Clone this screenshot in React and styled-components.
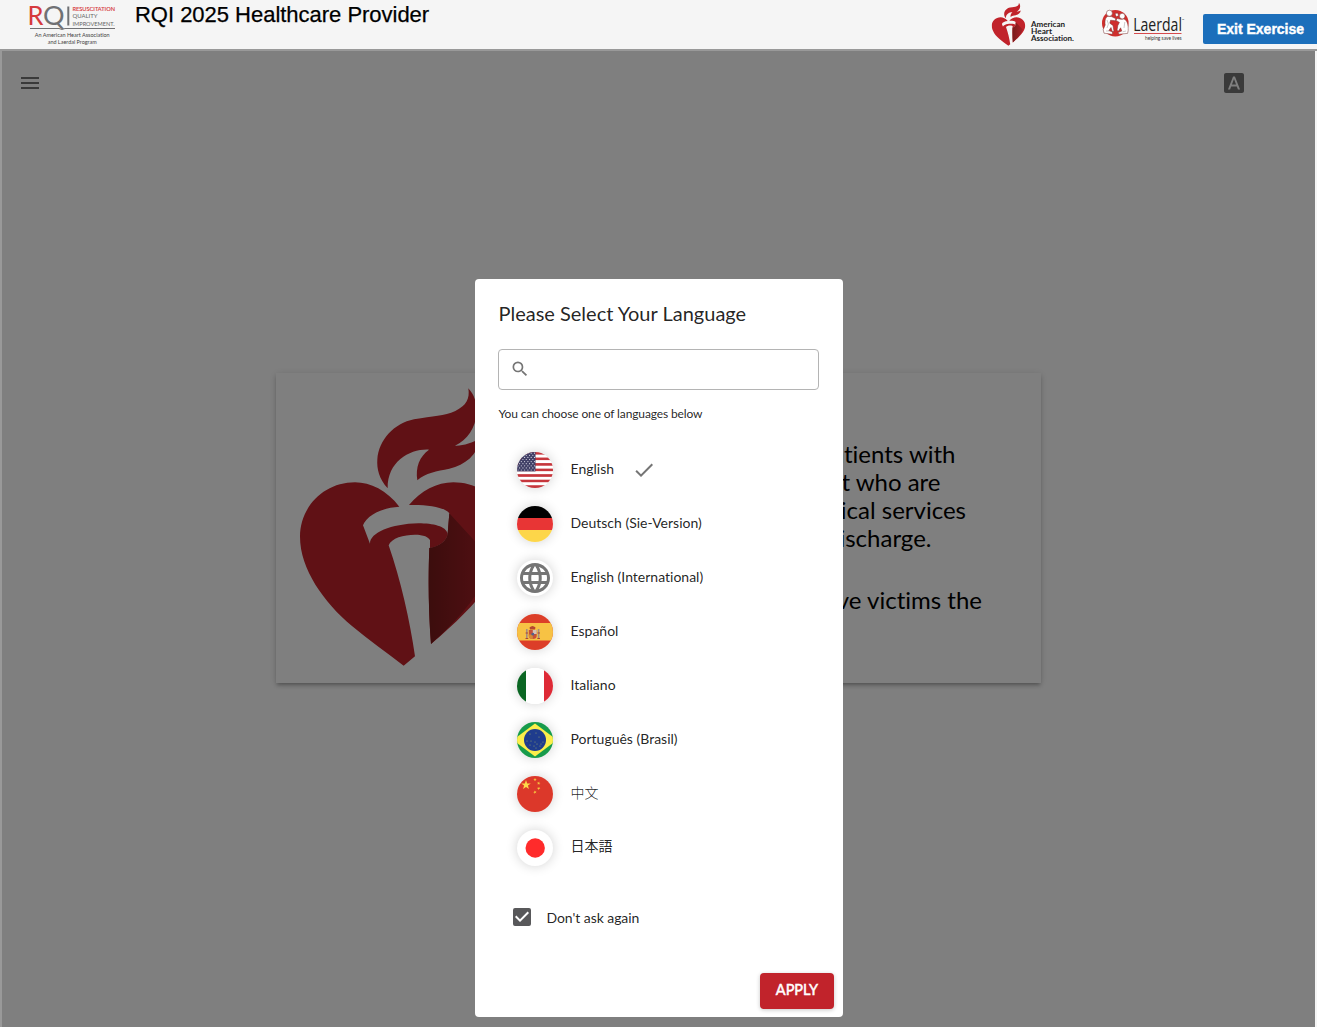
import React from "react";
import styled, { createGlobalStyle } from "styled-components";
import { MdMenu, MdFontDownload, MdSearch, MdCheck, MdLanguage, MdCheckBox } from "react-icons/md";

const GlobalStyle = createGlobalStyle`
  * { box-sizing: border-box; }
  body {
    margin: 0;
    background: #f5f5f5;
    overflow: hidden;
    font-family: Lato, sans-serif;
    font-variant-ligatures: none;
  }
`;

const Page = styled.div`
  display: flex;
  flex-direction: column;
  height: 100vh;
`;

const Header = styled.header`
  display: flex;
  align-items: flex-start;
  height: 49px;
  flex: none;
  background: #f5f5f5;
  padding-left: 28px;
`;

const HeaderTitle = styled.h1`
  margin: 2px 0 0 19px;
  flex: 1;
  font: 400 22px/26px "Liberation Sans", Arial, sans-serif;
  letter-spacing: -0.02px;
  color: #000;
  -webkit-text-stroke: 0.25px #000;
`;

const Logo = styled.svg`
  display: block;
  flex: none;
  overflow: visible;
  margin-right: ${(p) => p.$gap || 0}px;
`;

const ExitButton = styled.button`
  width: 114px;
  height: 30px;
  margin-top: 14px;
  padding: 0 0 0 1px;
  border: 0;
  border-radius: 2px 0 0 2px;
  background: #1c6fbb;
  color: #fff;
  font: 700 14px/30px "Liberation Sans", Arial, sans-serif;
  -webkit-text-stroke: 0.4px #fff;
`;

const Stage = styled.main`
  flex: 1;
  min-height: 0;
  display: grid;
  grid-template: minmax(0, 1fr) / minmax(0, 1fr);
  margin-right: 2px;
  border-left: 2px solid #999;
  background: #fff;
  > * { grid-area: 1 / 1; }
`;

const Scene = styled.section`
  display: flex;
  flex-direction: column;
  align-items: center;
`;

const Toolbar = styled.nav`
  align-self: stretch;
  display: flex;
  justify-content: space-between;
  padding: 20px 69px 0 16px;
  height: 322px;
  color: #757575;
`;

const Card = styled.article`
  display: flex;
  width: 765px;
  height: 310px;
  background: #fff;
  box-shadow: 0 3px 3px -2px rgba(0, 0, 0, 0.2), 0 3px 4px 0 rgba(0, 0, 0, 0.14), 0 1px 8px 0 rgba(0, 0, 0, 0.12);
`;

const CardCopy = styled.div`
  flex: 1;
  display: flex;
  flex-direction: column;
  align-items: flex-end;
  padding-top: 67px;
`;

const CopyLine = styled.span`
  font-size: 24px;
  line-height: 28px;
  white-space: nowrap;
  color: #000;
  margin-right: ${(p) => p.$inset}px;
  margin-top: ${(p) => p.$space || 0}px;
`;

const Backdrop = styled.div`
  z-index: 1;
  display: flex;
  justify-content: center;
  align-items: flex-end;
  padding: 0 0 10px 1px;
  background: rgba(0, 0, 0, 0.5);
`;

const TopEdge = styled.div`
  height: 2px;
  flex: none;
  background: #999;
`;

const Dialog = styled.div`
  display: flex;
  flex-direction: column;
  width: 368px;
  height: 738px;
  padding: 20px 9px 8px 24px;
  border-radius: 4px;
  background: #fff;
  color: rgba(0, 0, 0, 0.87);
`;

const DialogTitle = styled.h2`
  margin: 0 0 0 -0.5px;
  font-size: 20px;
  font-weight: 400;
  line-height: 28px;
`;

const SearchBox = styled.div`
  display: flex;
  align-items: center;
  width: 321px;
  height: 41px;
  margin: 22px 0 0 -0.8px;
  padding: 0 0 2px 11px;
  border: 1px solid #b4b4b4;
  border-radius: 4px;
  color: #757575;
`;

const Hint = styled.p`
  margin: 16px 0 0 -0.5px;
  font-size: 12px;
  line-height: 16px;
  letter-spacing: -0.13px;
`;

const LanguageList = styled.ul`
  list-style: none;
  margin: 21px 0 0;
  padding: 0 0 0 18px;
`;

const LanguageRow = styled.li`
  display: flex;
  align-items: center;
  height: 54px;
  font-size: 14px;
`;

const Flag = styled.span`
  width: 36px;
  height: 36px;
  flex: none;
  display: grid;
  border-radius: 50%;
  overflow: hidden;
  background: #fff;
  box-shadow: 0 0 12px rgba(0, 0, 0, 0.18);
  color: #757575;
`;

const LanguageName = styled.span`
  margin: 0 18px ${(p) => p.$lift || 2}px 17.5px;
  line-height: 20px;
  font-family: Lato, ${(p) => p.$cjk || '"Noto Sans"'}, sans-serif;
  font-weight: ${(p) => p.$weight || 400};
`;

const Selected = styled(MdCheck)`
  color: #757575;
`;

const Remember = styled.label`
  display: flex;
  align-items: center;
  gap: 12.5px;
  margin: 30px 0 0 11px;
  height: 24px;
  font-size: 14px;
  letter-spacing: -0.06px;
  svg { color: #58585a; }
  span { margin-top: 1px; }
`;

const ApplyButton = styled.button`
  margin: auto 0 0 auto;
  width: 74px;
  height: 36px;
  padding: 0 0 2px;
  border: 0;
  border-radius: 4px;
  background: #c1232b;
  color: #fff;
  font: 400 14.5px/34px Lato, sans-serif;
  -webkit-text-stroke: 0.5px #fff;
  box-shadow: 0 1px 4px rgba(0, 0, 0, 0.22);
`;

function HeartShapes({ id }) {
  return (
    <>
      <defs>
        <linearGradient id={id} gradientUnits="userSpaceOnUse" x1="506" y1="0" x2="740" y2="0">
          <stop offset="0" stopColor="#781a1a" />
          <stop offset="1" stopColor="#b3212a" />
        </linearGradient>
      </defs>
      <g fill="#c1232b">
        <path d="M418 440C380 391 332 367 285 367C192 367 120 440 120 530C120 627 192 727 275 797C325 839 379 877 431 917L465 889C450 783 422 660 386 556C394 534 431 524 465 524C490 524 507 531 510 541L510 564C540 559 561 541 563 521C558 499 520 490 475 490C393 492 330 518 330 551L309 496C320 466 367 443 418 440Z" />
        <path d="M447 435C482 393 531 367 580 367C672 367 745 438 745 530C745 620 660 728 513 852C506 760 504 660 508 564C540 559 561 541 563 521L568 460C558 443 503 433 447 435Z" />
        <path d="M383 385C357 357 350 326 352 298C356 240 402 190 462 178C520 168 552 168 586 153C619 137 630 116 625 85C642 103 652 130 650 158C647 204 622 239 585 257C610 258 636 249 662 235C652 286 616 315 568 326C530 334 497 338 472 361C466 322 478 290 507 269C452 266 382 303 383 385Z" />
      </g>
      <path fill={`url(#${id})`} d="M568 460L700 604C664 704 590 784 513 852C506 760 504 660 508 564C540 559 561 541 563 521Z" />
    </>
  );
}

function RqiLogo() {
  return (
    <Logo width="88" height="49" viewBox="28 0 88 49" fontFamily="Lato, sans-serif">
      <text x="27.5" y="25.3" fontSize="26.5" fill="#d6393d" textLength="16" lengthAdjust="spacingAndGlyphs">R</text>
      <text x="43" y="25.3" fontSize="26.5" fill="#707174" textLength="21.5" lengthAdjust="spacingAndGlyphs">Q</text>
      <rect x="67.3" y="6.5" width="2" height="19" fill="#707174" />
      <g fontSize="6.3">
        <text x="72.5" y="11" fill="#d6393d" stroke="#d6393d" strokeWidth=".15" textLength="42.5" lengthAdjust="spacingAndGlyphs">RESUSCITATION</text>
        <text x="72.5" y="18.3" fill="#666" textLength="25" lengthAdjust="spacingAndGlyphs">QUALITY</text>
        <text x="72.5" y="25.7" fill="#666" textLength="42" lengthAdjust="spacingAndGlyphs">IMPROVEMENT.</text>
      </g>
      <path d="M30 28.5H59L62 29.5L65 28.5H115" fill="none" stroke="#707174" strokeWidth="1" />
      <g fontSize="5.4" fill="#444">
        <text x="34.7" y="37" textLength="75" lengthAdjust="spacingAndGlyphs">An American Heart Association</text>
        <text x="47.7" y="43.6" textLength="49" lengthAdjust="spacingAndGlyphs">and Laerdal Program</text>
      </g>
    </Logo>
  );
}

function HeartAssociationLogo() {
  return (
    <Logo $gap={27} width="84" height="49" viewBox="991 0 84 49" fontFamily="Lato, sans-serif">
      <svg x="991.5" y="2.5" width="34" height="43.5" viewBox="115 80 635 842" preserveAspectRatio="none">
        <HeartShapes id="smallShade" />
      </svg>
      <g fontSize="7" fontWeight="700" fill="#222">
        <text x="1031" y="27" textLength="34" lengthAdjust="spacingAndGlyphs">American</text>
        <text x="1031" y="34" textLength="21" lengthAdjust="spacingAndGlyphs">Heart</text>
        <text x="1031" y="41" textLength="43" lengthAdjust="spacingAndGlyphs">Association.</text>
      </g>
    </Logo>
  );
}

function LaerdalLogo() {
  return (
    <Logo $gap={17} width="84" height="49" viewBox="1102 0 84 49">
      <circle cx="1115.3" cy="23.2" r="13.3" fill="#cf2f2d" />
      <g fill="#fff" stroke="#77302e" strokeWidth=".5" strokeLinejoin="round">
        <path d="M1108 16.3C1105.3 17.2 1104.6 21 1105.2 25L1103.2 29.5L1104 33.2L1112.5 34.3V32L1108.8 30.6L1111 27.5L1112.3 31.5H1114L1113 25.5L1109.8 23.2L1110.6 20.2L1115.6 20.8V18.6L1111.4 16.6Z" />
        <circle cx="1109.4" cy="13.2" r="3" />
        <path d="M1121 19.3L1117.4 18.6L1115.8 20.2L1119.4 22.4L1117.8 25.5L1117 30.5L1118.6 31L1120.6 27.8L1121.8 31L1118 32.6L1119 34.2L1127.6 33.4L1128.2 30.5C1128.4 25 1127.4 20 1123.8 19Z" />
        <circle cx="1122.2" cy="16.1" r="2.8" />
        <path d="M1115 13.6L1117.6 13L1118.6 15.6L1116.2 16.8Z" />
      </g>
      <path d="M1107 20L1108.4 24L1107 28M1124.8 22L1124 28M1106 31H1109M1122.5 31.8L1126 31" fill="none" stroke="#999" strokeWidth=".5" />
      <text x="1133.2" y="31.3" fontSize="17.5" fontFamily="Open Sans, sans-serif" fill="#202020" textLength="48.8" lengthAdjust="spacingAndGlyphs">Laerdal</text>
      <text x="1182" y="21" fontSize="3" fontFamily="Lato, sans-serif" fill="#444">™</text>
      <rect x="1134" y="33" width="47.5" height="1" fill="#d64a4c" />
      <text x="1145" y="40" fontSize="5.8" fontFamily="Lato, sans-serif" fill="#333" textLength="36.5" lengthAdjust="spacingAndGlyphs">helping save lives</text>
    </Logo>
  );
}

const star = (cx, cy, r, turn = 0) =>
  Array.from({ length: 10 }, (_, i) => {
    const a = -Math.PI / 2 + turn + (i * Math.PI) / 5;
    const d = i % 2 ? r * 0.4 : r;
    return `${cx + d * Math.cos(a)},${cy + d * Math.sin(a)}`;
  }).join(" ");

const usStars = Array.from({ length: 9 }, (_, row) =>
  Array.from({ length: 6 }, (_, col) => [1 + col * 3.3 + (row % 2) * 1.65, 1.2 + row * 2.1])
).flat();

const flags = {
  us: (
    <>
      {Array.from({ length: 13 }, (_, i) => (
        <rect key={i} y={(i * 36) / 13} width="36" height={36 / 13} fill={i % 2 ? "#fff" : "#c6363c"} />
      ))}
      <rect width="18.5" height="19.4" fill="#414067" />
      {usStars.filter(([x]) => x < 18).map(([x, y]) => (
        <circle key={`${x}-${y}`} cx={x} cy={y} r=".58" fill="#d8d8e4" />
      ))}
    </>
  ),
  de: (
    <>
      <rect width="36" height="12" fill="#000" />
      <rect y="12" width="36" height="12" fill="#e83535" />
      <rect y="24" width="36" height="12" fill="#fdd649" />
    </>
  ),
  es: (
    <>
      <rect width="36" height="36" fill="#dc3e28" />
      <rect y="9" width="36" height="17.5" fill="#f7c244" />
      <path d="M12.5 13.5Q15.5 10.5 18.5 13.5L18 15.5H13Z" fill="#b6472f" />
      <rect x="9" y="15" width="1.6" height="9" fill="#a58d80" />
      <rect x="20.8" y="15" width="1.6" height="9" fill="#a58d80" />
      <path d="M8.6 19H11M20.5 19H23M8.5 24.5H11.3M20.3 24.5H23" stroke="#b04432" strokeWidth="1.2" />
      <path d="M11.8 16H19.7V22Q19.7 25 15.8 25Q11.8 25 11.8 22Z" fill="#c7503a" />
      <path d="M15.8 16H19.7V20H15.8Z" fill="#d8c4b4" />
      <path d="M11.8 20.5H15.8V25Q11.8 25 11.8 22Z" fill="#d58b35" />
      <circle cx="15.8" cy="20.2" r="1.4" fill="#54618d" />
    </>
  ),
  it: (
    <>
      <rect width="9" height="36" fill="#0b6623" />
      <rect x="9" width="18" height="36" fill="#fff" />
      <rect x="27" width="9" height="36" fill="#de2a36" />
    </>
  ),
  br: (
    <>
      <rect width="36" height="36" fill="#179b4b" />
      <path d="M18 1.5L40 18L18 34.5L-4 18Z" fill="#fcee4b" />
      <circle cx="18" cy="18" r="11" fill="#1f3c8d" />
      {[[13, 12], [19, 11], [22, 15], [10, 19], [14, 19], [18, 20], [13, 23], [17, 24], [20, 22], [24, 22], [26, 20], [23, 24], [19, 26]].map(([x, y]) => (
        <circle key={`${x}-${y}`} cx={x} cy={y} r=".5" fill="#9fb069" />
      ))}
    </>
  ),
  cn: (
    <>
      <rect width="36" height="36" fill="#dc382a" />
      <polygon points={star(9, 9, 5)} fill="#fcd849" />
      {[[18, 3.5], [21.7, 7.2], [21.7, 12.5], [18, 16.2]].map(([x, y], i) => (
        <polygon key={i} points={star(x, y, 1.8, i * 0.3)} fill="#f7c63f" />
      ))}
    </>
  ),
  jp: <circle cx="18.2" cy="18" r="9.7" fill="#ff2b2b" />,
};

const languages = [
  { flag: "us", name: "English", selected: true },
  { flag: "de", name: "Deutsch (Sie-Version)" },
  { flag: "world", name: "English (International)" },
  { flag: "es", name: "Español" },
  { flag: "it", name: "Italiano" },
  { flag: "br", name: "Português (Brasil)" },
  { flag: "cn", name: "中文", cjk: '"Noto Sans CJK SC"', weight: 300 },
  { flag: "jp", name: "日本語", cjk: '"Noto Sans CJK JP"', lift: 4 },
];

const copy = [
  { text: "patients with", inset: 85.5 },
  { text: "arrest who are", inset: 100.5 },
  { text: "medical services", inset: 75 },
  { text: "discharge.", inset: 109.5 },
  { text: "give victims the", inset: 59, space: 34 },
];

export default function App() {
  return (
    <Page>
      <GlobalStyle />
      <Header>
        <RqiLogo />
        <HeaderTitle>RQI 2025 Healthcare Provider</HeaderTitle>
        <HeartAssociationLogo />
        <LaerdalLogo />
        <ExitButton>Exit Exercise</ExitButton>
      </Header>
      <TopEdge />
      <Stage>
        <Scene>
          <Toolbar>
            <MdMenu size={24} />
            <MdFontDownload size={24} />
          </Toolbar>
          <Card>
            <Logo width="380" height="310" viewBox="48 39 1140 930">
              <HeartShapes id="largeShade" />
            </Logo>
            <CardCopy>
              {copy.map((line) => (
                <CopyLine key={line.text} $inset={line.inset} $space={line.space}>{line.text}</CopyLine>
              ))}
            </CardCopy>
          </Card>
        </Scene>
        <Backdrop>
          <Dialog role="dialog">
            <DialogTitle>Please Select Your Language</DialogTitle>
            <SearchBox><MdSearch size={20} /></SearchBox>
            <Hint>You can choose one of languages below</Hint>
            <LanguageList>
              {languages.map((l) => (
                <LanguageRow key={l.name}>
                  <Flag>
                    {l.flag === "world" ? <MdLanguage size={36} /> : <svg width="36" height="36" viewBox="0 0 36 36">{flags[l.flag]}</svg>}
                  </Flag>
                  <LanguageName $cjk={l.cjk} $weight={l.weight} $lift={l.lift}>{l.name}</LanguageName>
                  {l.selected && <Selected size={24} />}
                </LanguageRow>
              ))}
            </LanguageList>
            <Remember><MdCheckBox size={24} /><span>Don't ask again</span></Remember>
            <ApplyButton>APPLY</ApplyButton>
          </Dialog>
        </Backdrop>
      </Stage>
    </Page>
  );
}
